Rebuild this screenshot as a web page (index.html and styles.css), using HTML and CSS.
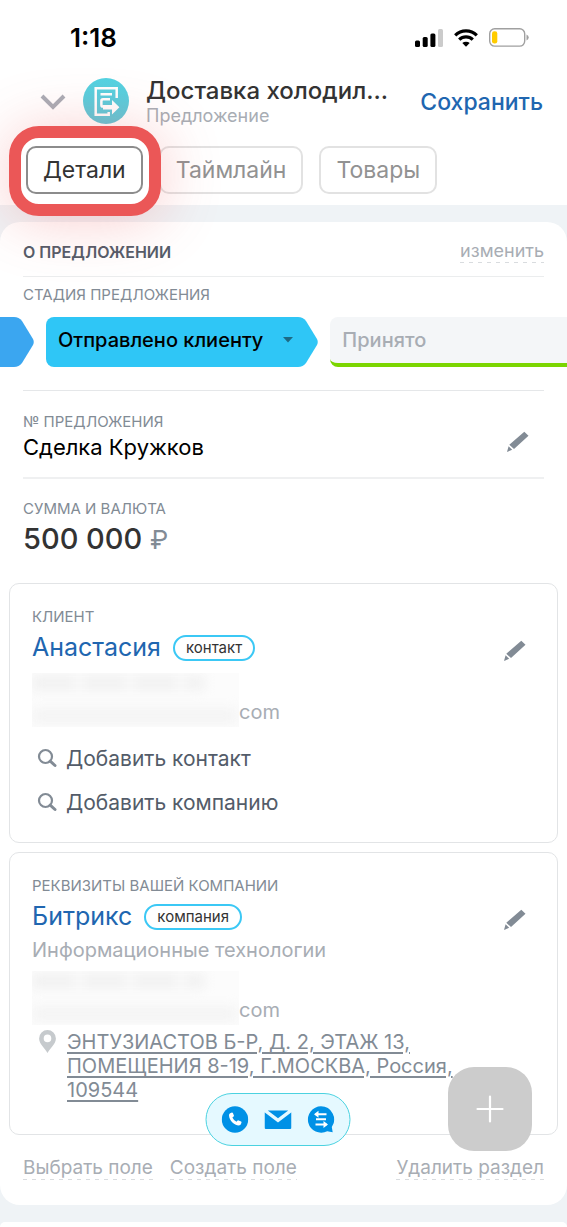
FILE: index.html
```html
<!DOCTYPE html>
<html lang="ru">
<head>
<meta charset="utf-8">
<meta name="viewport" content="width=device-width, initial-scale=1">
<title>Доставка холодильников</title>
<link rel="stylesheet" href="styles.css">
</head>
<body>
<svg class="defs" aria-hidden="true">
  <symbol id="pencil" viewBox="0 0 24 22"><path d="M18.300 .8l4.200 4L8 18.100l-4.700-4.300zM2.600 15.200l3.600 3.600L1 21z"/></symbol>
  <symbol id="search" viewBox="0 0 20 20"><circle cx="8.500" cy="8.500" r="6.500" fill="none" stroke="currentColor" stroke-width="2.200"/><path d="M13.200 13.200l4.800 4.300" stroke="currentColor" stroke-width="3" stroke-linecap="round"/></symbol>
</svg>
<div class="app">
  <header class="top">
    <div class="status">
      <span class="time">1:18</span>
      <span class="indicators">
        <svg width="28" height="18" viewBox="0 0 28 18"><rect y="11.500" width="5" height="6.500" rx="1.500"/><rect x="7.700" y="8" width="5" height="10" rx="1.500"/><rect x="15.400" y="4.500" width="5" height="13.500" rx="1.500"/><rect x="23" width="5" height="18" rx="1.500" fill="#cbcbcb"/></svg>
        <svg width="24" height="18" viewBox="0 0 24 18"><g fill="none" stroke="#000" stroke-width="3.200"><path d="M1.200 6.300a15.600 15.600 0 0 1 21.600 0"/><path d="M5.200 10.600a9.800 9.800 0 0 1 13.600 0"/></g><path d="M12 17.800l-3.700-3.700a5.400 5.400 0 0 1 7.400 0z"/></svg>
        <svg width="40" height="19" viewBox="0 0 40 19"><rect x=".7" y=".7" width="35" height="17.400" rx="5" fill="none" stroke="#a0a0a0" stroke-width="1.400"/><rect x="3" y="3.200" width="5.300" height="12.400" rx="2.300" fill="#ffcc00"/><path d="M37.500 6.500q2.200 1 2.200 3t-2.200 3z" fill="#a0a0a0"/></svg>
      </span>
    </div>
    <div class="titlebar">
      <button class="plain" aria-label="Свернуть"><svg width="26" height="16" viewBox="0 0 26 16" fill="none" stroke="#a9adb6" stroke-width="4"><path d="M2 2l11 11L24 2"/></svg></button>
      <svg class="logo" width="46" height="46" viewBox="0 0 46 46"><defs><linearGradient id="lg" x1="0" y1="0" x2="0" y2="1"><stop offset="0" stop-color="#52d3e2"/><stop offset="1" stop-color="#62c6d6"/></linearGradient></defs><circle cx="23" cy="23" r="23" fill="url(#lg)"/><path d="M33.700 20V10.300h-21v26.500h13V34M17.500 16.300h11.500M27 21.300h-7q-1.600 0-1.600 1.600v4q0 1.600 1.600 1.600h9" fill="none" stroke="#fff" stroke-width="2.500"/><path d="M29 22l7.400 7.300L29 36.500v-5h-9v-4.400h9z" fill="#fff"/></svg>
      <div class="titles">
        <h1>Доставка холодил...</h1>
        <p>Предложение</p>
      </div>
      <button class="plain save">Сохранить</button>
    </div>
    <nav class="tabs">
      <div class="spot"><button class="tab active">Детали</button></div>
      <button class="tab">Таймлайн</button>
      <button class="tab">Товары</button>
    </nav>
  </header>

  <main class="card">
    <div class="row head">
      <h2>О ПРЕДЛОЖЕНИИ</h2>
      <button class="plain dashed">изменить</button>
    </div>
    <section class="stage">
      <h3 class="label">СТАДИЯ ПРЕДЛОЖЕНИЯ</h3>
      <div class="stages">
        <div class="step done"><span class="step-body"></span><svg width="25" height="50" viewBox="0 0 25 50"><path d="M0 0h5q5 0 8 4l11 18q1.500 3 0 6L13 46q-3 4-8 4H0z"/></svg></div>
        <button class="step current"><span class="step-body">Отправлено клиенту <svg width="10" height="6" viewBox="0 0 10 6"><path d="M0 0h10L5 5.500z" fill="#1d6a84"/></svg></span><svg width="25" height="50" viewBox="0 0 25 50"><path d="M0 0h5q5 0 8 4l11 18q1.500 3 0 6L13 46q-3 4-8 4H0z"/></svg></button>
        <button class="step next">Принято</button>
      </div>
    </section>
    <section class="row field">
      <div>
        <h3 class="label">№ ПРЕДЛОЖЕНИЯ</h3>
        <p class="value">Сделка Кружков</p>
      </div>
      <button class="plain edit" aria-label="Изменить номер"><svg width="24" height="22"><use href="#pencil"/></svg></button>
    </section>
    <section class="sum">
      <h3 class="label">СУММА И ВАЛЮТА</h3>
      <p class="amount">500 000 <span>₽</span></p>
    </section>

    <section class="box">
      <h3 class="label">КЛИЕНТ</h3>
      <div class="who"><a href="#">Анастасия</a><span class="tag">контакт</span><button class="plain edit" aria-label="Изменить клиента"><svg width="24" height="22"><use href="#pencil"/></svg></button></div>
      <div class="contacts">
        <div class="hidden-data"><i class="phone"></i><i class="mail"></i></div><span>com</span>
      </div>
      <button class="plain add"><svg width="20" height="20"><use href="#search"/></svg>Добавить контакт</button>
      <button class="plain add"><svg width="20" height="20"><use href="#search"/></svg>Добавить компанию</button>
    </section>

    <section class="box">
      <h3 class="label">РЕКВИЗИТЫ ВАШЕЙ КОМПАНИИ</h3>
      <div class="who"><a href="#">Битрикс</a><span class="tag">компания</span><button class="plain edit" aria-label="Изменить компанию"><svg width="24" height="22"><use href="#pencil"/></svg></button></div>
      <p class="about">Информационные технологии</p>
      <div class="contacts">
        <div class="hidden-data"><i class="phone"></i><i class="mail"></i></div><span>com</span>
      </div>
      <div class="address">
        <svg width="17" height="23" viewBox="0 0 17 23"><path fill-rule="evenodd" d="M8.500 0A8.400 8.400 0 0 0 .1 8.400C.1 14 6 18 8.500 23 11 18 16.900 14 16.900 8.400A8.400 8.400 0 0 0 8.500 0zm0 4.600a3.800 3.800 0 1 1 0 7.600 3.800 3.800 0 0 1 0-7.600z" fill="#c6cacd"/></svg>
        <a href="#">ЭНТУЗИАСТОВ Б-Р, Д. 2, ЭТАЖ 13,<br>ПОМЕЩЕНИЯ 8-19, Г.МОСКВА, Россия,<br>109544</a>
      </div>
    </section>

    <footer class="row links">
      <button class="plain dashed">Выбрать поле</button>
      <button class="plain dashed">Создать поле</button>
      <button class="plain dashed last">Удалить раздел</button>
    </footer>
  </main>
  <div class="card following"></div>
</div>

<div class="quick">
  <button class="plain" aria-label="Позвонить"><svg width="27" height="27" viewBox="0 0 27 27"><circle cx="13.500" cy="13.500" r="13.200" fill="#0091e6"/><path d="M8.700 7.200l1.700-.6q.7-.1 1 .5l1 2.500q.2.600-.3 1l-1.200 1q1.200 2.900 4.100 4.200l1.100-1.200q.4-.4 1-.2l2.500 1.200q.6.300.4.900l-.6 1.700q-.5 1.100-2 1.200C12.500 19.300 7.700 14.500 7.500 9.200q0-1.500 1.200-2z" fill="#fff"/></svg></button>
  <button class="plain" aria-label="Написать письмо"><svg width="27" height="27" viewBox="0 0 27 27"><path d="M3.300 4.500h20.400L13.500 12.300zM0 6.200l13.500 10.200L27 6.200V21.500q0 1.500-1.500 1.500h-24Q0 23 0 21.500z" fill="#0091e6"/></svg></button>
  <button class="plain" aria-label="Открыть чат"><svg width="27" height="27" viewBox="0 0 27 27"><path d="M13.500.3a13.200 13.200 0 1 0 6.200 24.900l5.500 1-.9-5.200A13.200 13.200 0 0 0 13.500.3z" fill="#0091e6"/><path d="M8 8.300h11M8.500 13.300h10M8 18.500h11" stroke="#fff" stroke-width="1.900"/><path d="M11 4.800v7L6.500 8.300zM16 15v7l4.500-3.500z" fill="#fff"/></svg></button>
</div>
<button class="fab" aria-label="Добавить"><svg width="28" height="28" viewBox="0 0 28 28" stroke="#fff" stroke-width="2.200" stroke-linecap="round"><path d="M14 1.500v25M1.500 14h25"/></svg></button>
</body>
</html>
```
FILE: styles.css
```css
* { box-sizing: border-box; }
body, h1, h2, h3, p { margin: 0; font-weight: 400; }
body {
  background: #eff3f6;
  color: #333;
  font-family: Inter, "Liberation Sans", sans-serif;
}
svg { display: block; flex: none; }
.defs { position: absolute; width: 0; height: 0; }
button { font-family: inherit; cursor: pointer; }
.plain { border: 0; padding: 0; background: none; color: inherit; }

.app { display: flex; flex-direction: column; min-height: 100vh; overflow: hidden; }

.top { padding-bottom: 11px; background: #fff; }
.status {
  display: flex;
  align-items: center;
  justify-content: space-between;
  height: 75px;
  padding: 0 38px 0 70px;
}
.time { color: #000; font-size: 26px; font-weight: 600; line-height: 30px; }
.indicators { display: flex; align-items: center; gap: 11px; }

.titlebar { display: flex; align-items: center; height: 54px; padding: 0 24px 0 40px; }
.logo { margin: 0 17px 3px 17px; }
.titles { flex: 1; min-width: 0; white-space: nowrap; }
.titles h1 { font-size: 24px; font-weight: 500; line-height: 28px; }
.titles p { color: #a8adb4; font-size: 18px; line-height: 22px; }
.save { color: #2066b0; font-size: 23px; font-weight: 500; }

.tabs { display: flex; gap: 16px; padding: 17px 26px 0; }
.tab {
  height: 48px;
  padding: 0 15px;
  border: 2px solid #e2e2e2;
  border-radius: 10px;
  background: #fff;
  color: #929292;
  font-size: 23px;
  line-height: 28px;
}
.tab.active { border-color: #8c8c8c; color: #333; }
.spot { position: relative; }
.spot::after {
  content: "";
  position: absolute;
  inset: -20px -18px -22px -17px;
  border: 12px solid #eb5757;
  border-radius: 30px;
  box-shadow: 0 4px 60px rgba(235, 87, 87, .3);
  pointer-events: none;
}

.card { margin-top: 17px; border-radius: 20px; background: #fff; }
.following { flex: 1; min-height: 5px; border-radius: 20px 20px 0 0; }
.row { display: flex; align-items: center; }
.head { justify-content: space-between; height: 55px; margin: 0 23px; padding-top: 5px; border-bottom: 1px solid #ebedee; }
h2 { color: #535c69; font-size: 16px; font-weight: 600; line-height: 20px; }
.label { color: #828b95; font-size: 15px; line-height: 18px; }
.dashed {
  padding-bottom: 1px;
  background: repeating-linear-gradient(90deg, #d9dcdf 0 4px, transparent 4px 9px) left bottom / 100% 1px no-repeat;
  color: #a8adb4;
  font-size: 18px;
  line-height: 22px;
}

.stage { height: 114px; margin: 0 23px; padding-top: 9px; border-bottom: 1px solid #e5e7e9; }
.stages { display: flex; gap: 12px; height: 50px; margin: 13px -23px 0; }
.step { display: flex; flex: none; padding: 0; border: 0; background: none; font-size: 20px; font-weight: 500; }
.step-body { display: flex; align-items: center; gap: 20px; height: 50px; padding-bottom: 4px; }
.done { fill: #3ba6f0; }
.done .step-body { width: 9px; background: #3ba6f0; }
.current { fill: #2fc6f6; color: #000; }
.current .step-body { padding-left: 12px; border-radius: 8px 0 0 8px; background: #2fc6f6; }
.next {
  flex: 1;
  align-items: center;
  padding: 0 12px;
  border-bottom: 4px solid #7bd500;
  border-radius: 8px 0 0 8px;
  background: #f4f6f8;
  color: #a8adb4;
}

.field { justify-content: space-between; height: 88px; margin: 0 23px; padding-top: 7px; border-bottom: 2px solid #eff0f1; }
.value { color: #000; font-size: 22px; line-height: 32px; }
.edit { padding: 8px 14px 0 6px; fill: #828b95; }
.sum { padding: 21px 23px 23px; }
.amount { font-size: 29px; font-weight: 500; line-height: 41px; }
.amount span { color: #828b95; font-size: 26px; font-weight: 400; }

.box { margin: 0 9px 9px; padding: 24px 16px 18px 22px; border: 1px solid #e2e4e6; border-radius: 10px; }
.who { display: flex; align-items: center; height: 42px; }
.who a { color: #2066b0; font-size: 25px; text-decoration: none; }
.who .edit { margin-left: auto; }
.tag {
  margin: 2px 0 0 12px;
  padding: 0 11px;
  border: 2px solid #3bc8f5;
  border-radius: 13px;
  font-size: 15px;
  line-height: 22px;
}
.contacts { display: flex; align-items: flex-end; height: 59px; color: #a8adb4; font-size: 20px; }
.contacts > span { line-height: 30px; }
.hidden-data {
  display: flex;
  flex-direction: column;
  gap: 19px;
  width: 207px;
  height: 54px;
  padding-top: 3px;
  overflow: hidden;
  background: #fcfcfc;
}
.hidden-data i {
  flex: none;
  height: 14px;
  filter: blur(6px);
  background: repeating-linear-gradient(90deg, #f0f0f0 0 43px, #fafafa 43px 51px);
}
.hidden-data .phone { width: 172px; }
.hidden-data .mail { width: 205px; background: #f3f3f3; }
.add {
  display: flex;
  align-items: center;
  gap: 9px;
  height: 44px;
  padding-left: 5px;
  color: #535c69;
  font-size: 21px;
}
.add svg { color: #828b95; }
.contacts + .add { margin-top: 9px; }
.about { color: #a8adb4; font-size: 20px; line-height: 26px; padding-bottom: 3px; }
.address { display: flex; align-items: flex-start; gap: 11px; padding: 5px 0 14px 7px; color: #828b95; }
.address a { color: inherit; font-size: 20px; line-height: 24px; text-underline-offset: 3px; }

.links { gap: 17px; padding: 13px 23px 25px; }
.links .dashed { font-size: 19px; }
.last { margin-left: auto; }

.quick {
  position: fixed;
  bottom: 81px;
  left: 49%;
  display: flex;
  gap: 16px;
  padding: 12px 15px;
  border: 1px solid #4bd2e0;
  border-radius: 27px;
  background: #e5f9ff;
  transform: translateX(-50%);
}
.fab {
  position: fixed;
  right: 35px;
  bottom: 76px;
  display: grid;
  place-items: center;
  width: 84px;
  height: 84px;
  border: 0;
  border-radius: 26px;
  background: #ccc;
}
```
